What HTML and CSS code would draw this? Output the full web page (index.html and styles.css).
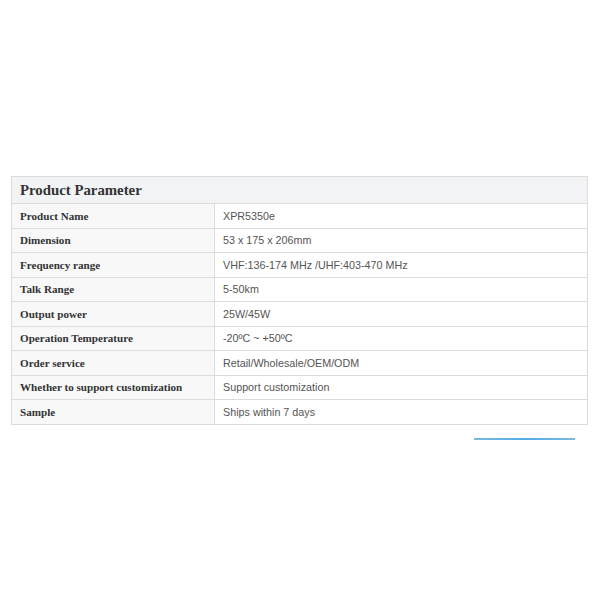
FILE: index.html
```html
<!DOCTYPE html>
<html>
<head>
<meta charset="utf-8">
<link rel="stylesheet" href="styles.css">
</head>
<body>
<div class="page">
  <table class="params">
    <colgroup>
      <col class="col-label">
      <col class="col-value">
    </colgroup>
    <thead>
      <tr><th colspan="2" class="title">Product Parameter</th></tr>
    </thead>
    <tbody>
      <tr><th>Product Name</th><td>XPR5350e</td></tr>
      <tr><th>Dimension</th><td>53 x 175 x 206mm</td></tr>
      <tr><th>Frequency range</th><td>VHF:136-174 MHz /UHF:403-470 MHz</td></tr>
      <tr><th>Talk Range</th><td>5-50km</td></tr>
      <tr><th>Output power</th><td>25W/45W</td></tr>
      <tr><th>Operation Temperature</th><td>-20ºC ~ +50ºC</td></tr>
      <tr><th>Order service</th><td>Retail/Wholesale/OEM/ODM</td></tr>
      <tr><th>Whether to support customization</th><td>Support customization</td></tr>
      <tr><th>Sample</th><td>Ships within 7 days</td></tr>
    </tbody>
  </table>
  <div class="underline-row"><div class="underline"></div></div>
</div>
</body>
</html>
```
FILE: styles.css
```css
html, body {
  margin: 0;
  padding: 0;
  background: #fff;
}
.page {
  padding: 176px 12px 0 11px;
}
.params {
  width: 577px;
  border-collapse: collapse;
  table-layout: fixed;
  border: 1px solid #dcdcdc;
}
.col-label {
  width: 203px;
}
.params th,
.params td {
  border: 1px solid #dcdcdc;
  height: 24.5px;
  padding: 0 8px;
  box-sizing: border-box;
  text-align: left;
  vertical-align: middle;
}
.params .title {
  height: 27px;
  background: #f2f3f5;
  font-family: "Liberation Serif", serif;
  font-weight: bold;
  font-size: 14.8px;
  color: #333;
}
.params tbody th {
  background: #f8f8f9;
  font-family: "Liberation Serif", serif;
  font-weight: bold;
  font-size: 11.1px;
  color: #333;
}
.params td {
  font-family: "Liberation Sans", Arial, sans-serif;
  font-size: 10.75px;
  color: #555;
  background: #fff;
}
.underline-row {
  display: flex;
  justify-content: flex-end;
  padding: 13px 13px 0 0;
}
.underline {
  width: 101px;
  height: 2px;
  background: linear-gradient(90deg, #7bb9de, #53acea 50%, #7bb9de);
}
```
